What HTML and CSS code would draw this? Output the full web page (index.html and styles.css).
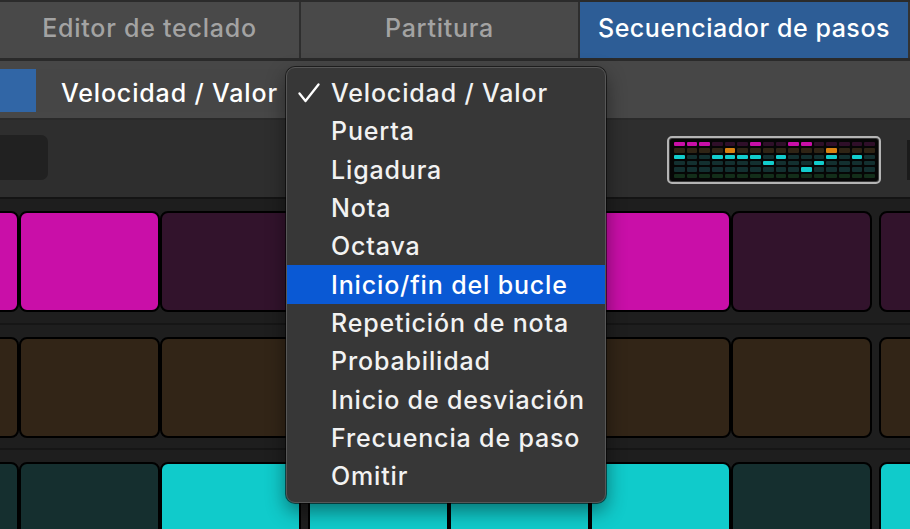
FILE: index.html
```html
<!DOCTYPE html>
<html lang="es">
<head>
<meta charset="utf-8">
<title>Secuenciador de pasos</title>
<link rel="stylesheet" href="styles.css">
</head>
<body>
<div class="app">
  <div class="tabbar">
    <div class="tab tab-keys">Editor de teclado</div>
    <div class="tab tab-score">Partitura</div>
    <div class="tab tab-step active">Secuenciador de pasos</div>
    <div class="tab-end"></div>
  </div>
  <div class="modebar">
    <div class="mode-strip"></div>
    <div class="mode-popup">Velocidad / Valor</div>
  </div>
  <div class="controls">
    <div class="ctl-left"></div>
    <div class="overview">
      <div class="ov-inner">
        <i class="m1"></i><i class="m1"></i><i class="m1"></i><i class="m0"></i><i class="m0"></i><i class="m0"></i><i class="m1"></i><i class="m0"></i><i class="m0"></i><i class="m1"></i><i class="m1"></i><i class="m0"></i><i class="m0"></i><i class="m0"></i><i class="m0"></i><i class="m0"></i>
        <i class="o0"></i><i class="o0"></i><i class="o0"></i><i class="o0"></i><i class="o1"></i><i class="o0"></i><i class="o0"></i><i class="o0"></i><i class="o0"></i><i class="o0"></i><i class="o0"></i><i class="o0"></i><i class="o1"></i><i class="o0"></i><i class="o0"></i><i class="o0"></i>
        <i class="c1"></i><i class="c0"></i><i class="c0"></i><i class="c1"></i><i class="c1"></i><i class="c1"></i><i class="c1"></i><i class="c0"></i><i class="c1"></i><i class="c0"></i><i class="c0"></i><i class="c0"></i><i class="c1"></i><i class="c0"></i><i class="c1"></i><i class="c0"></i>
        <i class="c0"></i><i class="c0"></i><i class="c0"></i><i class="c0"></i><i class="c0"></i><i class="c0"></i><i class="c0"></i><i class="c1"></i><i class="c0"></i><i class="c0"></i><i class="c0"></i><i class="c1"></i><i class="c0"></i><i class="c0"></i><i class="c0"></i><i class="c0"></i>
        <i class="c0"></i><i class="c0"></i><i class="c0"></i><i class="c0"></i><i class="c0"></i><i class="c0"></i><i class="c0"></i><i class="c0"></i><i class="c0"></i><i class="c0"></i><i class="c1"></i><i class="c0"></i><i class="c0"></i><i class="c0"></i><i class="c0"></i><i class="c0"></i>
        <i class="g0"></i><i class="g0"></i><i class="g0"></i><i class="g0"></i><i class="g0"></i><i class="g0"></i><i class="g0"></i><i class="g0"></i><i class="g0"></i><i class="g0"></i><i class="g0"></i><i class="g0"></i><i class="g0"></i><i class="g0"></i><i class="g0"></i><i class="g0"></i>
      </div>
    </div>
    <div class="ctl-nub"></div>
  </div>
  <div class="rows">
    <div class="row">
      <div class="group"><div class="pad pm1"></div><div class="pad pm1"></div><div class="pad pm1"></div><div class="pad pm0"></div></div>
      <div class="group"><div class="pad pm0"></div><div class="pad pm0"></div><div class="pad pm1"></div><div class="pad pm0"></div></div>
      <div class="group"><div class="pad pm0"></div><div class="pad pm1"></div><div class="pad pm1"></div><div class="pad pm0"></div></div>
    </div>
    <div class="row">
      <div class="group"><div class="pad po0"></div><div class="pad po0"></div><div class="pad po0"></div><div class="pad po0"></div></div>
      <div class="group"><div class="pad po1"></div><div class="pad po0"></div><div class="pad po0"></div><div class="pad po0"></div></div>
      <div class="group"><div class="pad po0"></div><div class="pad po0"></div><div class="pad po0"></div><div class="pad po0"></div></div>
    </div>
    <div class="row">
      <div class="group"><div class="pad pc1"></div><div class="pad pc0"></div><div class="pad pc0"></div><div class="pad pc1"></div></div>
      <div class="group"><div class="pad pc1"></div><div class="pad pc1"></div><div class="pad pc1"></div><div class="pad pc0"></div></div>
      <div class="group"><div class="pad pc1"></div><div class="pad pc0"></div><div class="pad pc0"></div><div class="pad pc0"></div></div>
    </div>
  </div>

  <div class="menu">
    <div class="item checked"><svg class="check" width="24" height="20" viewBox="0 0 24 20"><path d="M2.5 10.5 L8.5 18 L21.5 1.5" fill="none" stroke="#ffffff" stroke-width="2.3" stroke-linecap="round" stroke-linejoin="round"/></svg>Velocidad / Valor</div>
    <div class="item">Puerta</div>
    <div class="item">Ligadura</div>
    <div class="item">Nota</div>
    <div class="item">Octava</div>
    <div class="item selected">Inicio/fin del bucle</div>
    <div class="item">Repetición de nota</div>
    <div class="item">Probabilidad</div>
    <div class="item">Inicio de desviación</div>
    <div class="item">Frecuencia de paso</div>
    <div class="item">Omitir</div>
  </div>
</div>
</body>
</html>
```

FILE: styles.css
```css
html, body {
  margin: 0;
  padding: 0;
  background: #1d1d1d;
  overflow: hidden;
}
.app {
  position: relative;
  width: 910px;
  height: 529px;
  overflow: hidden;
  font-family: Inter, "Noto Sans", "Liberation Sans", sans-serif;
  font-weight: 500;
  -webkit-font-smoothing: antialiased;
}

/* Tab bar */
.tabbar {
  display: flex;
  box-sizing: border-box;
  border-top: 2px solid #2b2b2b;
  border-bottom: 3px solid #2a2a2a;
  height: 61px;
  background: #494949;
}
.tab {
  display: flex;
  align-items: center;
  justify-content: center;
  padding-bottom: 5px;
  font-size: 25px;
  color: #a3a3a3;
  letter-spacing: 0.75px;
}
.tab-keys { width: 299px; border-right: 2px solid #2e2e2e; }
.tab-score { width: 277px; border-right: 2px solid #2e2e2e; }
.tab-step { width: 328px; background: #2d5d96; color: #ffffff; letter-spacing: 0.55px; }
.tab-end { flex: 1; background: #333; }

/* Mode bar */
.modebar {
  display: flex;
  align-items: center;
  height: 59px;
  box-sizing: border-box;
  background: #474747;
  border-bottom: 2px solid #2a2a2a;
  padding-top: 2px;
}
.mode-strip {
  width: 36px;
  height: 43px;
  background: #3166a6;
}
.mode-popup {
  height: 43px;
  display: flex;
  align-items: center;
  padding-top: 4px;
  box-sizing: border-box;
  padding-left: 25px;
  padding-right: 12px;
  font-size: 25px;
  color: #ffffff;
  letter-spacing: 0.85px;
  background: #464646;
}

/* Controls */
.controls {
  display: flex;
  align-items: flex-start;
  height: 79px;
  box-sizing: border-box;
  background: #2e2e2e;
  border-bottom: 2px solid #141414;
}
.ctl-left {
  width: 58px;
  height: 45px;
  margin-left: -10px;
  margin-top: 15px;
  border-radius: 7px;
  background: #212121;
}
.overview {
  margin-left: auto;
  margin-top: 16px;
  width: 214px;
  height: 48px;
  box-sizing: border-box;
  border: 2px solid #b4b4b4;
  border-radius: 5px;
  background: #3a3a3a;
  padding: 1px;
}
.ov-inner {
  height: 100%;
  box-sizing: border-box;
  background: #060606;
  border-radius: 2px;
  padding: 3px 3px 3px 4px;
  display: grid;
  grid-template-columns: repeat(16, 1fr);
  grid-template-rows: repeat(6, 1fr);
  column-gap: 2px;
  row-gap: 2px;
}
.ov-inner i { display: block; border-radius: 1px; }
.m1 { background: #c90fa8; }
.m0 { background: #2f0f29; }
.o1 { background: #d98212; }
.o0 { background: #2f2415; }
.c1 { background: #12cccc; }
.c0 { background: #133030; }
.g0 { background: #132e1a; }
.ctl-nub {
  width: 3px;
  height: 40px;
  margin-left: 26px;
  margin-top: 20px;
  background: #1b1b1b;
}

/* Rows */
.rows {
  background: #1d1d1d;
}
.row {
  display: flex;
  height: 125.5px;
  box-sizing: border-box;
  padding-top: 12px;
  margin-left: -263px;
  border-bottom: 2px solid #161616;
  background: #1e1e1e;
}
.group {
  display: flex;
  flex: 0 0 auto;
  margin-right: 7px;
}
.pad {
  flex: 0 0 141px;
  height: 101px;
  box-sizing: border-box;
  border: 2px solid #000;
  border-radius: 8px;
}
.pm1 { background: #c90fa8; }
.pm0 { background: #32132c; }
.po1 { background: #d98212; }
.po0 { background: #322517; }
.pc1 { background: #10cbcb; }
.pc0 { background: #152f2f; }

/* Popup menu */
.menu {
  position: absolute;
  left: 286px;
  top: 67px;
  width: 320px;
  height: 436px;
  box-sizing: border-box;
  padding-top: 6px;
  background: #373737;
  border: 1px solid #575757;
  border-radius: 9px;
  box-shadow: 0 0 0 1px rgba(0,0,0,0.55), 0 8px 20px rgba(0,0,0,0.45);
}
.item {
  position: relative;
  height: 38.3px;
  display: flex;
  align-items: center;
  padding-left: 44px;
  font-size: 25px;
  color: #f2f2f2;
  letter-spacing: 0.85px;
}
.item.selected {
  background: #0a59d4;
  color: #ffffff;
}
.check {
  position: absolute;
  left: 10px;
  top: 9px;
}
```
